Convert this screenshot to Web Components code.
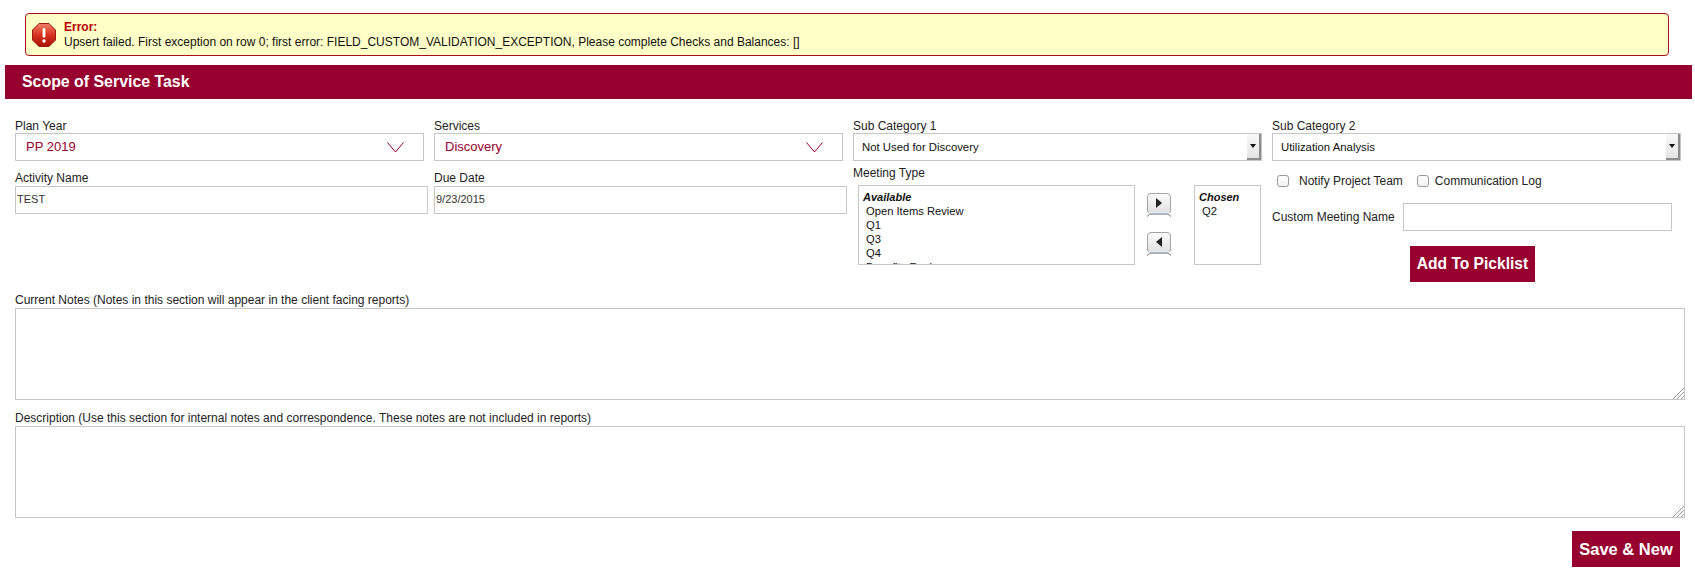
<!DOCTYPE html>
<html>
<head>
<meta charset="utf-8">
<title>Scope of Service Task</title>
<style>
    html, body { margin: 0; padding: 0; background: #fff; }
    body { font-family: "Liberation Sans", Arial, sans-serif; font-size: 12px; color: #222; overflow: hidden; }
</style>
</head>
<body>
<task-page></task-page>

<script>
function defineEl(name, css, html) {
    customElements.define(name, class extends HTMLElement {
        constructor() {
            super();
            this.attachShadow({ mode: 'open' });
        }

        connectedCallback() {
            const tpl = document.createElement('template');
            tpl.innerHTML = `<style>${css}</style>${typeof html === 'function' ? html(this) : html}`;
            this.shadowRoot.appendChild(tpl.content.cloneNode(true));
        }
    });
}

const attr = (el, name, def = '') => el.getAttribute(name) || def;

defineEl('error-banner', `
    :host { display: flex; align-items: center; margin: 13px 26px 9px 25px; height: 43px; box-sizing: border-box;
        background: #ffffc8; border: 1px solid #a8101c; border-radius: 4px; padding-left: 6px; gap: 8px; }
    svg { flex: none; display: block; }
    .txt { line-height: 15px; color: #111; }
    b { display: block; color: #b80000; }
`, `
    <svg width="24" height="24" viewBox="0 0 24 24">
        <defs><linearGradient id="g" x1="0" y1="0" x2="0" y2="1">
            <stop offset="0" stop-color="#f0806a"/><stop offset=".5" stop-color="#d8301c"/><stop offset="1" stop-color="#a81408"/>
        </linearGradient></defs>
        <polygon points="7,0.5 17,0.5 23.5,7 23.5,17 17,23.5 7,23.5 0.5,17 0.5,7" fill="url(#g)" stroke="#9c1a10"/>
        <rect x="10.6" y="5" width="2.8" height="9.5" rx="1.2" fill="#fff"/>
        <circle cx="12" cy="18" r="1.7" fill="#fff"/>
    </svg>
    <div class="txt"><b><slot name="title"></slot></b><slot></slot></div>
`);

defineEl('title-bar', `
    :host { display: flex; align-items: center; height: 34px; margin: 0 3px 0 5px; padding-left: 17px;
        background: #97002e; color: #fff; font-size: 15.9px; font-weight: bold; }
`, `<slot></slot>`);

defineEl('form-field', `
    :host { display: block; }
    .lab { height: var(--lab-h, 14px); line-height: 14px; color: #222; white-space: nowrap; }
`, el => `<div class="lab">${attr(el, 'label')}</div><slot></slot>`);

defineEl('brand-select', `
    :host { display: flex; align-items: center; justify-content: space-between; box-sizing: border-box; height: 28px;
        border: 1px solid #c6c6c6; background: #fff; color: #97002e; font-size: 13px; padding: 0 19px 2px 10px; }
    svg { display: block; margin-top: 2px; }
`, `
    <slot></slot>
    <svg width="17" height="11" viewBox="0 0 17 11"><path d="M0.5 0.5 L8.5 10 L16.5 0.5" fill="none" stroke="#97002e" stroke-width="1"/></svg>
`);

defineEl('classic-select', `
    :host { display: flex; align-items: center; justify-content: space-between; box-sizing: border-box; height: 28px;
        border: 1px solid #c6c6c6; background: #fff; color: #111; font-size: 11.35px; padding-left: 8px; }
    .btn { width: 14px; height: 26px; box-sizing: border-box; display: flex; align-items: center; justify-content: center;
        background: linear-gradient(#f8f8f8, #e4e4e4); border-right: 2px solid #8c8c8c; border-bottom: 2px solid #8c8c8c; }
    .btn i { border: 3px solid transparent; border-top: 4px solid #111; border-bottom: 0; }
`, `<slot></slot><div class="btn"><i></i></div>`);

defineEl('text-box', `
    :host { display: flex; align-items: center; box-sizing: border-box; height: 28px; border: 1px solid #c6c6c6;
        background: #fff; color: #333; font-size: 11px; padding: 0 0 2px 1px; }
`, `<slot></slot>`);

defineEl('pick-list', `
    :host { display: block; box-sizing: border-box; height: 80px; overflow: hidden; border: 1px solid #c6c6c6;
        background: #fff; color: #111; font-size: 11.2px; line-height: 14px; padding: 4px 0 0 4px; }
    b { display: block; font-style: italic; font-size: 11px; }
    .opts { padding-left: 3px; }
`, el => `<b>${attr(el, 'heading')}</b><div class="opts"><slot></slot></div>`);

defineEl('arrow-btn', `
    :host { display: block; width: 24px; height: 24px; }
    .cap { box-sizing: border-box; width: 24px; height: 20px; background: linear-gradient(#fbfbfb, #e2e2e2);
        border: 1px solid #a4a4a4; border-radius: 4px 4px 2px 2px; display: flex; align-items: center; justify-content: center; }
    svg { display: block; }
    .foot { margin-top: -1px; }
`, el => `
    <div class="cap">
        <svg width="6" height="10" viewBox="0 0 6 10"><path d="${attr(el, 'dir') === 'left' ? 'M6 0 L0 5 L6 10 Z' : 'M0 0 L6 5 L0 10 Z'}" fill="#222"/></svg>
    </div>
    <svg class="foot" width="24" height="5" viewBox="0 0 24 5">
        <rect x="2" y="0" width="20" height="3" fill="#e2eef8"/>
        <path d="M0 4.5 L3 2 H21 L24 4.5" fill="none" stroke="#777"/>
    </svg>
`);

defineEl('meeting-picker', `
    :host { display: grid; grid-template-columns: 277px 59px 67px; margin: 5px 0 0 5px; width: 403px; }
    .arrows { display: flex; flex-direction: column; gap: 15px; padding: 8px 0 0 12px; }
`, `
    <slot name="available"></slot>
    <div class="arrows"><arrow-btn dir="right"></arrow-btn><arrow-btn dir="left"></arrow-btn></div>
    <slot name="chosen"></slot>
`);

defineEl('check-item', `
    :host { display: inline-flex; align-items: center; gap: var(--gap, 10px); }
    i { display: block; box-sizing: border-box; width: 12px; height: 12px; border: 1px solid #9a9a9a; border-radius: 3px;
        background: linear-gradient(#fff, #f2f2f2); }
`, `<i></i><slot></slot>`);

defineEl('brand-button', `
    :host { display: inline-flex; align-items: center; justify-content: center; box-sizing: border-box; height: 36px;
        background: #97002e; color: #fff; font-size: 16px; font-weight: bold; }
`, `<slot></slot>`);

defineEl('note-area', `
    :host { display: block; margin: 0 10px 0 15px; }
    .lab { height: 16px; line-height: 16px; color: #222; }
    .box { position: relative; box-sizing: border-box; border: 1px solid #c6c6c6; background: #fff; }
    svg { position: absolute; right: 0; bottom: 0; display: block; }
`, el => `
    <div class="lab">${attr(el, 'label')}</div>
    <div class="box" style="height:${attr(el, 'rows', '92')}px">
        <svg width="12" height="12" viewBox="0 0 12 12"><path d="M1 12 L12 1 M5 12 L12 5 M9 12 L12 9" stroke="#999" stroke-width="1" fill="none"/></svg>
    </div>
`);

defineEl('task-page', `
    :host { display: block; height: 587px; }
    .grid { display: grid; grid-template-columns: repeat(4, 409px); column-gap: 10px; padding: 20px 0 0 15px; height: 192px; box-sizing: border-box; }
    .col { display: flex; flex-direction: column; }
    .gap { margin-top: 10px; --lab-h: 15px; }
    .wide { width: 413px; }
    .checks { display: flex; align-items: center; gap: 14px; height: 20px; margin: 10px 0 0 5px; }
    .custom { display: flex; align-items: center; gap: 8px; margin-top: 12px; white-space: nowrap; }
    .custom text-box { width: 269px; }
    .add { display: flex; margin: 15px 0 0 138px; }
    .notes { display: flex; flex-direction: column; gap: 10px; margin-top: 1px; }
    .foot { display: flex; justify-content: flex-end; padding: 13px 15px 0 0; }
`, `
    <error-banner>
        <span slot="title">Error:</span>
        Upsert failed. First exception on row 0; first error: FIELD_CUSTOM_VALIDATION_EXCEPTION, Please complete Checks and Balances: []
    </error-banner>
    <title-bar>Scope of Service Task</title-bar>

    <div class="grid">
        <div class="col">
            <form-field label="Plan Year"><brand-select>PP 2019</brand-select></form-field>
            <form-field class="gap" label="Activity Name"><text-box class="wide">TEST</text-box></form-field>
        </div>
        <div class="col">
            <form-field label="Services"><brand-select>Discovery</brand-select></form-field>
            <form-field class="gap" label="Due Date"><text-box class="wide">9/23/2015</text-box></form-field>
        </div>
        <div class="col">
            <form-field label="Sub Category 1"><classic-select>Not Used for Discovery</classic-select></form-field>
            <form-field style="margin-top:5px" label="Meeting Type">
                <meeting-picker>
                    <pick-list slot="available" heading="Available">Open Items Review<br>Q1<br>Q3<br>Q4<br>Benefits Review</pick-list>
                    <pick-list slot="chosen" heading="Chosen">Q2</pick-list>
                </meeting-picker>
            </form-field>
        </div>
        <div class="col">
            <form-field label="Sub Category 2"><classic-select>Utilization Analysis</classic-select></form-field>
            <div class="checks">
                <check-item>Notify Project Team</check-item>
                <check-item style="--gap:6px">Communication Log</check-item>
            </div>
            <div class="custom">Custom Meeting Name <text-box></text-box></div>
            <div class="add"><brand-button style="width:125px;font-size:15.6px">Add To Picklist</brand-button></div>
        </div>
    </div>

    <div class="notes">
        <note-area label="Current Notes (Notes in this section will appear in the client facing reports)" rows="92"></note-area>
        <note-area label="Description (Use this section for internal notes and correspondence. These notes are not included in reports)" rows="92"></note-area>
    </div>
    <div class="foot"><brand-button style="width:108px;font-size:16.5px">Save &amp; New</brand-button></div>
`);
</script>
</body>
</html>
